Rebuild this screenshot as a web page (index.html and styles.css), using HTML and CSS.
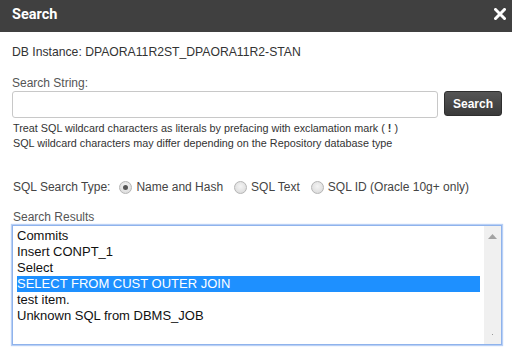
FILE: index.html
```html
<!DOCTYPE html>
<html>
<head>
<meta charset="utf-8">
<link rel="stylesheet" href="styles.css">
</head>
<body>
<div class="dialog">
  <div class="titlebar">
    <span class="title">Search</span>
    <svg class="close" width="12" height="12" viewBox="0 0 12 12"><path d="M1.5 1.5 L10.5 10.5 M10.5 1.5 L1.5 10.5" stroke="#fff" stroke-width="3" stroke-linecap="square"/></svg>
  </div>
  <div class="content">
    <div class="instance">DB Instance: DPAORA11R2ST_DPAORA11R2-STAN</div>
    <div class="label">Search String:</div>
    <div class="searchrow">
      <div class="input"></div>
      <div class="btn">Search</div>
    </div>
    <div class="help">
      <div>Treat SQL wildcard characters as literals by prefacing with exclamation mark ( <b>!</b> )</div>
      <div>SQL wildcard characters may differ depending on the Repository database type</div>
    </div>
    <div class="typerow">
      <span class="typelabel">SQL Search Type:</span>
      <span class="opt"><span class="radio checked"></span>Name and Hash</span>
      <span class="opt"><span class="radio"></span>SQL Text</span>
      <span class="opt"><span class="radio"></span>SQL ID (Oracle 10g+ only)</span>
    </div>
    <div class="label results-label">Search Results</div>
    <div class="listbox">
      <div class="items">
        <div class="item">Commits</div>
        <div class="item">Insert CONPT_1</div>
        <div class="item">Select</div>
        <div class="item selected">SELECT FROM CUST OUTER JOIN</div>
        <div class="item">test item.</div>
        <div class="item">Unknown SQL from DBMS_JOB</div>
      </div>
      <div class="scrollbar">
        <svg width="9" height="5" viewBox="0 0 9 5"><path d="M4.5 0 L9 5 L0 5 Z" fill="#a3a3a3"/></svg>
        <span class="dot"></span>
      </div>
    </div>
  </div>
</div>
</body>
</html>
```

FILE: styles.css
```css
html, body {
  margin: 0;
  padding: 0;
  background: #fff;
}
.dialog {
  width: 512px;
  height: 349px;
  font-family: "Liberation Sans", Arial, sans-serif;
  overflow: hidden;
}
.titlebar {
  height: 32px;
  background: #404040;
  display: flex;
  align-items: center;
  justify-content: space-between;
  padding: 0 6px 0 12px;
}
.title {
  color: #fff;
  font-family: Roboto, "Liberation Sans", sans-serif;
  font-weight: 700;
  font-size: 14.5px;
  margin-top: -3px;
}
.close {
  margin-top: -5px;
}
.content {
  padding: 13px 10px 0 12px;
}
.instance {
  font-size: 12.2px;
  color: #333;
  line-height: 14px;
}
.label {
  font-size: 12px;
  color: #555;
  line-height: 14px;
  margin-top: 17px;
}
.searchrow {
  display: flex;
  gap: 6px;
  margin-top: 1px;
}
.input {
  width: 424px;
  height: 25px;
  border: 1px solid #c8c8c8;
  border-radius: 3px;
  background: #fff;
}
.btn {
  width: 58px;
  height: 25px;
  box-sizing: border-box;
  border-radius: 3px;
  background: linear-gradient(#555, #3a3a3a);
  border: 1px solid #2e2e2e;
  color: #fff;
  font-weight: 700;
  font-size: 12px;
  display: flex;
  align-items: center;
  justify-content: center;
}
.help {
  font-size: 10.8px;
  color: #333;
  line-height: 15px;
  margin-top: 3px;
  padding-left: 1px;
}
.help b {
  font-weight: 700;
}
.typerow {
  display: flex;
  align-items: center;
  font-size: 12px;
  color: #444;
  margin-top: 29px;
  padding-left: 1px;
  line-height: 14px;
}
.typelabel {
  margin-right: 9px;
}
.opt {
  display: flex;
  align-items: center;
  margin-right: 11px;
}
.radio {
  width: 11px;
  height: 11px;
  border-radius: 50%;
  border: 1px solid #b5b5b5;
  background: radial-gradient(circle at 50% 40%, #f4f4f4, #d6d6d6);
  margin-right: 4px;
  position: relative;
}
.radio.checked::after {
  content: "";
  position: absolute;
  left: 3px;
  top: 3px;
  width: 5px;
  height: 5px;
  border-radius: 50%;
  background: #555;
}
.results-label {
  margin-top: 16px;
  padding-left: 1px;
}
.listbox {
  width: 490px;
  height: 120px;
  box-sizing: border-box;
  border: 1px solid #8fb3ec;
  box-shadow: 0 0 1px 1px #b9d0f5;
  margin-top: 1px;
  display: flex;
}
.items {
  flex: 1;
  padding: 2px 4px 0 4px;
}
.item {
  font-size: 13px;
  color: #111;
  line-height: 16px;
  height: 16px;
  white-space: nowrap;
}
.item.selected {
  background: #1e90ff;
  color: #fff;
}
.scrollbar {
  width: 17px;
  background: #f0f0f0;
  display: flex;
  flex-direction: column;
  align-items: center;
  justify-content: space-between;
  padding: 8px 0 9px 0;
}
.dot {
  width: 1px;
  height: 1px;
  background: #999;
}
```
